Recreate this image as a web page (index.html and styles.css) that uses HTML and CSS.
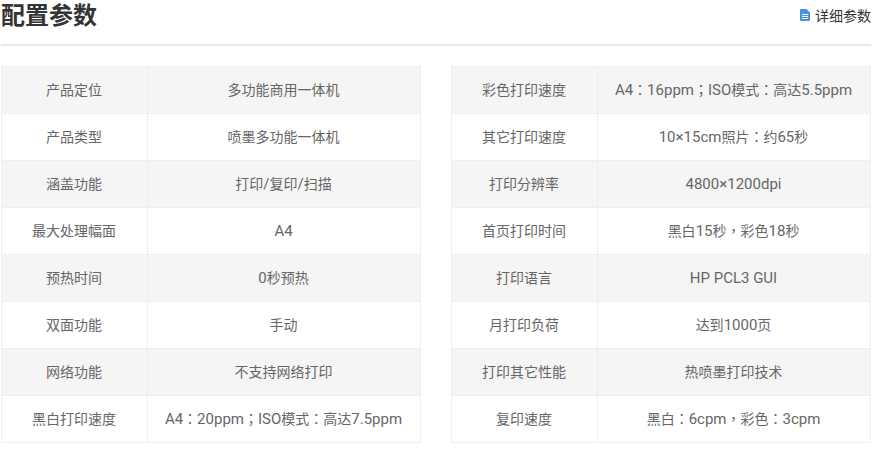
FILE: index.html
```html
<!DOCTYPE html>
<html lang="zh-CN">
<head>
<meta charset="utf-8">
<title>配置参数</title>
<link rel="stylesheet" href="styles.css">
</head>
<body>
<div class="page">
  <header class="head">
    <h2 class="title">配置参数</h2>
    <a class="more" href="#">
      <svg class="doc" viewBox="0 0 10 12" width="10" height="12"><path d="M1 0h5.5L10 3.5V11a1 1 0 0 1-1 1H1a1 1 0 0 1-1-1V1a1 1 0 0 1 1-1z" fill="#4a90e2"/><path d="M2 5.5h6M2 7.5h6M2 9.5h6" stroke="#fff" stroke-width="1"/></svg>详细参数</a>
  </header>
  <div class="tables">
    <table class="spec">
      <tr><th>产品定位</th><td>多功能商用一体机</td></tr>
      <tr><th>产品类型</th><td>喷墨多功能一体机</td></tr>
      <tr><th>涵盖功能</th><td>打印<span class="l">/</span>复印<span class="l">/</span>扫描</td></tr>
      <tr><th>最大处理幅面</th><td><span class="l">A4</span></td></tr>
      <tr><th>预热时间</th><td><span class="l">0</span>秒预热</td></tr>
      <tr><th>双面功能</th><td>手动</td></tr>
      <tr><th>网络功能</th><td>不支持网络打印</td></tr>
      <tr><th>黑白打印速度</th><td><span class="l">A4</span><span class="p" lang="zh-TW">：</span><span class="l">20ppm</span><span class="p" lang="zh-TW">；</span><span class="l">ISO</span>模式<span class="p" lang="zh-TW">：</span>高达<span class="l">7.5ppm</span></td></tr>
    </table>
    <table class="spec">
      <tr><th>彩色打印速度</th><td><span class="l">A4</span><span class="p" lang="zh-TW">：</span><span class="l">16ppm</span><span class="p" lang="zh-TW">；</span><span class="l">ISO</span>模式<span class="p" lang="zh-TW">：</span>高达<span class="l">5.5ppm</span></td></tr>
      <tr><th>其它打印速度</th><td><span class="l">10×15cm</span>照片<span class="p" lang="zh-TW">：</span>约<span class="l">65</span>秒</td></tr>
      <tr><th>打印分辨率</th><td><span class="l">4800×1200dpi</span></td></tr>
      <tr><th>首页打印时间</th><td>黑白<span class="l">15</span>秒<span class="p" lang="zh-TW">，</span>彩色<span class="l">18</span>秒</td></tr>
      <tr><th>打印语言</th><td><span class="l">HP PCL3 GUI</span></td></tr>
      <tr><th>月打印负荷</th><td>达到<span class="l">1000</span>页</td></tr>
      <tr><th>打印其它性能</th><td>热喷墨打印技术</td></tr>
      <tr><th>复印速度</th><td>黑白<span class="p" lang="zh-TW">：</span><span class="l">6cpm</span><span class="p" lang="zh-TW">，</span>彩色<span class="p" lang="zh-TW">：</span><span class="l">3cpm</span></td></tr>
    </table>
  </div>
</div>
</body>
</html>
```
FILE: styles.css
```css
* { box-sizing: border-box; }
html, body { margin: 0; padding: 0; background: #fff; }
body { font-family: "Noto Sans CJK SC", sans-serif; color: #666; font-size: 14px; }
.page { width: 870px; margin-left: 1px; height: 452px; overflow: hidden; }
.head { display: flex; justify-content: space-between; align-items: flex-start; height: 46px; border-bottom: 2px solid #e8e8e8; }
.title { margin: 0; font-size: 24px; line-height: 28px; font-weight: 700; color: #333; }
.more { display: flex; align-items: center; gap: 5px; height: 30px; font-size: 14px; color: #333; text-decoration: none; }
.doc { display: block; }
.tables { display: flex; justify-content: space-between; margin-top: 20px; }
.spec { width: 420px; border-collapse: collapse; table-layout: fixed; }
.spec th, .spec td { height: 47px; padding: 0 1px 2px 0; border: 1px solid #eee; text-align: center; font-weight: 400; font-size: 14px; line-height: 20px; color: #666; }
.spec th { width: 146px; }
.spec tr:nth-child(odd) th, .spec tr:nth-child(odd) td { background: #f5f5f5; }
.l { font-family: Roboto, sans-serif; font-size: 15px; }
.p { font-family: "Noto Sans CJK TC", sans-serif; }
```
